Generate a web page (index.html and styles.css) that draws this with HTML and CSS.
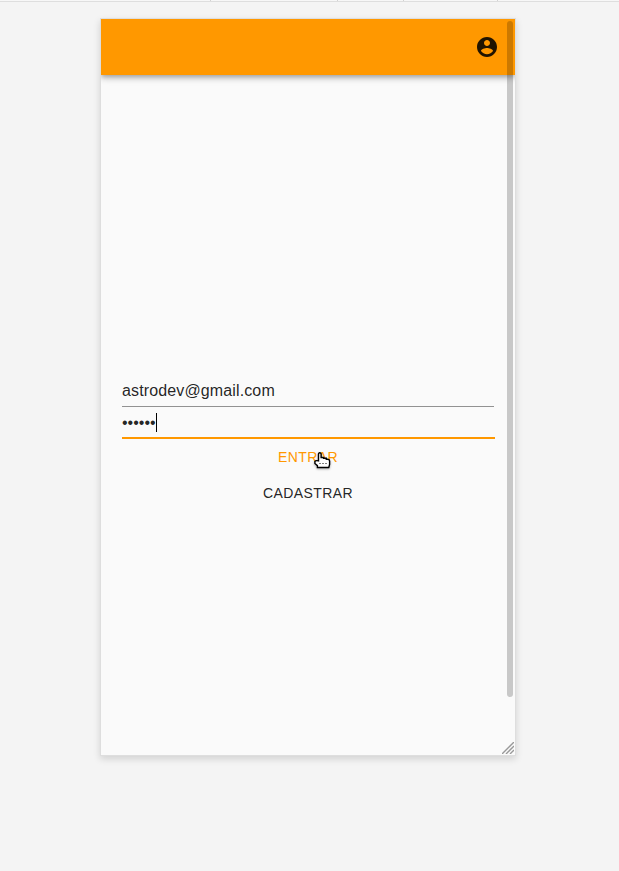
FILE: index.html
```html
<!DOCTYPE html>
<html lang="pt-BR">
<head>
<meta charset="utf-8">
<title>Entrar</title>
<link rel="stylesheet" href="styles.css">
</head>
<body>
<div class="ruler"><i></i><i></i><i></i><i></i></div>
<main class="device">
  <header class="appbar">
    <svg class="account" viewBox="0 0 24 24"><path d="M12 2C6.48 2 2 6.48 2 12s4.48 10 10 10 10-4.48 10-10S17.52 2 12 2zm0 3c1.66 0 3 1.34 3 3s-1.34 3-3 3-3-1.34-3-3 1.34-3 3-3zm0 14.2c-2.5 0-4.71-1.28-6-3.22.03-1.99 4-3.08 6-3.08 1.99 0 5.97 1.09 6 3.08-1.29 1.94-3.5 3.22-6 3.22z"/></svg>
  </header>
  <form class="login">
    <div class="field">astrodev@gmail.com</div>
    <div class="field focused"><span class="password">••••••</span><span class="caret"></span></div>
    <div class="button primary">ENTRAR</div>
    <div class="button">CADASTRAR</div>
  </form>
  <div class="scrollbar"></div>
  <svg class="resizer" viewBox="0 0 12 12"><path d="M0 12L12 0M4 12l8-8M8 12l4-4"/></svg>
</main>
<svg class="pointer" viewBox="0 0 17 17"><path d="M4.5 8.5V2.2Q4.5 .8 5.8 .8T7.1 2.2V5.5H9.6V6.3H12.3V7.2H13.8Q15.6 7.4 15.6 9V12.5L14.8 15.5H3.4V13.6L.9 11.5V9.3Q1.6 8.3 4.5 8.9Z"/><path class="knuckles" d="M5.5 11.5h1M8.5 11.5h1M11.5 11.5h1"/></svg>
</body>
</html>
```
FILE: styles.css
```css
* {
  box-sizing: border-box;
}

body {
  margin: 0;
  height: 871px;
  overflow: hidden;
  background: #f4f4f4;
  color: rgba(0, 0, 0, 0.87);
  font-family: "Liberation Sans", Arial, sans-serif;
}

.ruler {
  display: grid;
  grid-template-columns: 211px 127px 66px 94px;
  height: 2px;
  background: #f7f7f7;
  border-bottom: 1px solid #dedede;
}

.ruler i {
  border-right: 1px solid #d2d2d2;
}

.device {
  position: relative;
  width: 416px;
  height: 738px;
  margin: 16px 0 0 100px;
  border: 1px solid #dedede;
  background: #fafafa;
  box-shadow: 0 3px 7px rgba(0, 0, 0, 0.14);
}

.appbar {
  display: flex;
  align-items: center;
  justify-content: flex-end;
  height: 56px;
  padding-right: 16px;
  background: #ff9800;
  box-shadow: 0 2px 4px -1px rgba(0, 0, 0, 0.2), 0 4px 5px rgba(0, 0, 0, 0.14), 0 1px 10px rgba(0, 0, 0, 0.12);
  clip-path: inset(0 0 -16px 0);
}

.account {
  width: 24px;
  height: 24px;
  fill: rgba(0, 0, 0, 0.87);
}

.login {
  width: 373px;
  margin: 300px 0 0 21px;
}

.field {
  display: flex;
  align-items: center;
  width: 372px;
  height: 32px;
  font-size: 16px;
  letter-spacing: 0.13px;
  border-bottom: 1px solid #929292;
}

.focused {
  width: 373px;
  letter-spacing: 0;
  border-bottom: 2px solid #ff9800;
}

.password {
  padding-top: 1px;
}

.caret {
  width: 1px;
  height: 19px;
  background: #000;
}

.button {
  display: flex;
  align-items: center;
  justify-content: center;
  width: 372px;
  height: 36px;
  padding-bottom: 2px;
  font-size: 14px;
  letter-spacing: 0.4px;
  transform: translateY(1px) scaleY(1.1);
}

.primary {
  color: #ff9800;
}

.scrollbar {
  position: absolute;
  top: 2px;
  right: 2px;
  width: 6px;
  height: 676px;
  border-radius: 3px;
  background: rgba(0, 0, 0, 0.2);
}

.resizer {
  position: absolute;
  right: 1px;
  bottom: 1px;
  width: 12px;
  height: 12px;
  stroke: #999;
  stroke-width: 1.4;
}

.pointer {
  position: absolute;
  left: 314px;
  top: 452px;
  width: 17px;
  height: 17px;
  fill: #fff;
  stroke: #000;
  stroke-width: 1.4;
  filter: drop-shadow(0 1px 1px rgba(0, 0, 0, 0.3));
}

.knuckles {
  stroke-width: 1;
}
```
